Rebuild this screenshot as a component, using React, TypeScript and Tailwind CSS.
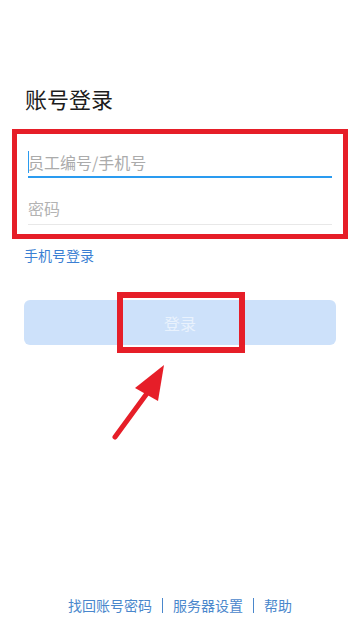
import React from "react";

const App: React.FC = () => {
  return (
    <div className="relative w-[360px] h-[639px] bg-white flex flex-col overflow-hidden font-['Noto_Sans_CJK_SC','Noto_Sans',sans-serif]">
      <main className="px-6 pt-[83px]">
        {/* 标题 */}
        <h1 className="text-[22px] leading-[30px] text-[#1c1c1c] pl-px">账号登录</h1>

        {/* 输入框 */}
        <div className="mt-[32px] px-1">
          <div className="relative pt-[6px] pb-[3px] border-b-2 border-[#2a9bf0]">
            <span className="absolute left-0 top-[6px] w-px h-[22px] bg-[#2a9bf0]" />
            <p className="text-[16px] leading-[22px] text-[#ababab]">员工编号/手机号</p>
          </div>
          <div className="pt-[19px] pb-[5px] border-b border-[#e8e8e8]">
            <p className="text-[16px] leading-[22px] text-[#b3b3b3]">密码</p>
          </div>
        </div>

        <p className="mt-5 text-[14px] leading-5 text-[#3b7fd3]">手机号登录</p>

        {/* 登录按钮 */}
        <button className="mt-[35px] w-full h-[45px] rounded-md bg-[#cde1fa] text-[16px] text-[#e9f2fd]">
          登录
        </button>
      </main>

      <footer className="mt-auto pb-6 flex justify-center items-center text-[14px] leading-5 text-[#4a87cc]">
        <span>找回账号密码</span>
        <span className="w-px h-[15px] bg-[#4a87cc] mx-[10px]" />
        <span>服务器设置</span>
        <span className="w-px h-[15px] bg-[#4a87cc] mx-[10px]" />
        <span>帮助</span>
      </footer>

      {/* 标注 */}
      <div className="absolute left-[12px] top-[129px] w-[336px] h-[110px] border-[5px] border-[#e61e28]" />
      <div className="absolute left-[117px] top-[292px] w-[128px] h-[61px] border-[6px] border-[#e61e28]" />
      <svg className="absolute left-0 top-0" width="360" height="639" viewBox="0 0 360 639">
        <line x1="115" y1="437" x2="148" y2="392" stroke="#e61e28" strokeWidth="5" strokeLinecap="round" />
        <polygon points="164,365 135,388 158,401" fill="#e61e28" />
      </svg>
    </div>
  );
};

export default App;
